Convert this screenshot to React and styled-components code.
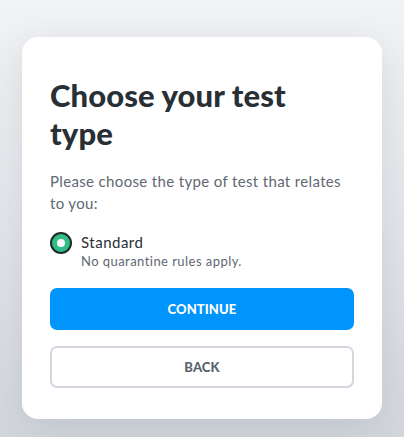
import React, { useState } from "react";
import styled, { createGlobalStyle } from "styled-components";

const Global = createGlobalStyle`
  html, body { margin: 0; padding: 0; }
  body {
    width: 404px;
    height: 437px;
    overflow: hidden;
    background: linear-gradient(180deg, #f2f3f5 0%, #e6e8ec 45%, #d3d7dd 100%);
    font-family: Lato, "Noto Sans", sans-serif;
    -webkit-font-smoothing: antialiased;
  }
`;

const Page = styled.div`
  padding: 37px 22px 0 22px;
`;

const Card = styled.div`
  box-sizing: border-box;
  width: 360px;
  background: #ffffff;
  border-radius: 16px;
  box-shadow: 0 10px 40px rgba(40, 50, 70, 0.12);
  padding: 39px 28px 31px 28px;
  display: flex;
  flex-direction: column;
`;

const Title = styled.h1`
  margin: 0;
  font-family: Lato, sans-serif;
  font-weight: 900;
  font-size: 31px;
  line-height: 38px;
  color: #283035;
  letter-spacing: 0.1px;
`;

const Lead = styled.p`
  margin: 18px 0 0 0;
  width: 300px;
  font-size: 15px;
  line-height: 22px;
  color: #5f6873;
  letter-spacing: 0.35px;
`;

const Option = styled.label`
  display: flex;
  align-items: flex-start;
  gap: 9px;
  margin-top: 18px;
  cursor: pointer;
`;

const Radio = styled.span`
  box-sizing: border-box;
  flex: none;
  width: 22px;
  height: 22px;
  border-radius: 50%;
  border: 2px solid #1f2a2a;
  background: ${(p) => (p.$checked ? "#2fbf86" : "#fff")};
  display: flex;
  align-items: center;
  justify-content: center;
  &::after {
    content: "";
    width: 8px;
    height: 8px;
    border-radius: 50%;
    background: #ffffff;
  }
`;

const OptionText = styled.span`
  display: flex;
  flex-direction: column;
`;

const OptionLabel = styled.span`
  font-size: 15px;
  line-height: 20px;
  color: #283035;
  letter-spacing: 0.5px;
`;

const OptionHint = styled.span`
  font-size: 13px;
  line-height: 18px;
  color: #5f6873;
  letter-spacing: 0.45px;
`;

const Actions = styled.div`
  display: flex;
  flex-direction: column;
  gap: 16px;
  margin-top: 18px;
`;

const Button = styled.button`
  box-sizing: border-box;
  width: 100%;
  height: 42px;
  border-radius: 7px;
  font-family: Lato, sans-serif;
  font-weight: 900;
  font-size: 13px;
  letter-spacing: 0.1px;
  text-transform: uppercase;
  cursor: pointer;
  border: ${(p) => (p.$variant === "primary" ? "none" : "2px solid #d3d8e0")};
  background: ${(p) => (p.$variant === "primary" ? "#0094fd" : "#ffffff")};
  color: ${(p) => (p.$variant === "primary" ? "#ffffff" : "#5a6270")};
`;

export default function App() {
  const [checked, setChecked] = useState(true);
  return (
    <>
      <Global />
      <Page>
        <Card>
          <Title>Choose your test type</Title>
          <Lead>Please choose the type of test that relates to you:</Lead>
          <Option onClick={() => setChecked(true)}>
            <Radio $checked={checked} />
            <OptionText>
              <OptionLabel>Standard</OptionLabel>
              <OptionHint>No quarantine rules apply.</OptionHint>
            </OptionText>
          </Option>
          <Actions>
            <Button $variant="primary">Continue</Button>
            <Button $variant="secondary">Back</Button>
          </Actions>
        </Card>
      </Page>
    </>
  );
}
